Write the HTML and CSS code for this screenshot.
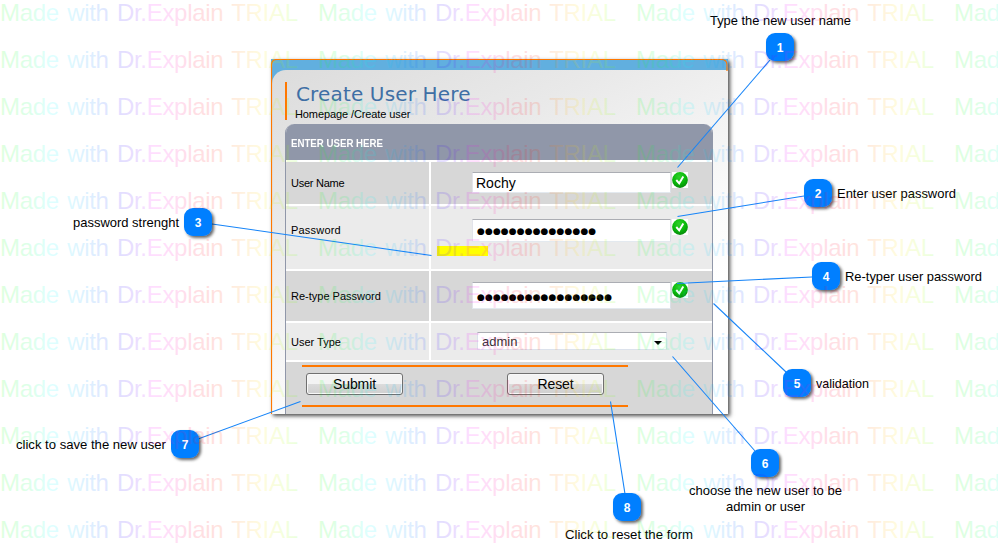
FILE: index.html
```html
<!DOCTYPE html>
<html lang="en">
<head>
<meta charset="utf-8">
<title>Create User Here</title>
<link rel="stylesheet" href="styles.css">
</head>
<body>
<main class="panel">
  <div class="body">
    <header class="heading">
      <h1>Create User Here</h1>
      <p>Homepage /Create user</p>
    </header>
    <section class="table">
      <div class="caption"><span>ENTER USER HERE</span></div>
      <div class="row r1"><div class="cell label"><span class="t1">User Name</span></div><div class="cell field"><div class="input name">Rochy</div><svg class="ok" viewBox="0 0 16 16"><use href="#check"/></svg></div></div>
      <div class="row r2 light"><div class="cell label"><span class="t2">Password</span></div><div class="cell field"><div class="input dots">●●●●●●●●●●●●●●●</div><svg class="ok" viewBox="0 0 16 16"><use href="#check"/></svg><div class="strength"></div></div></div>
      <div class="row r3"><div class="cell label"><span class="t3">Re-type Password</span></div><div class="cell field"><div class="input dots">●●●●●●●●●●●●●●●●●</div><svg class="ok" viewBox="0 0 16 16"><use href="#check"/></svg></div></div>
      <div class="row r4 light"><div class="cell label"><span class="t4">User Type</span></div><div class="cell field"><div class="select">admin<svg class="arrow" viewBox="0 0 8 4"><path d="M0 0h8L4 4z"/></svg></div></div></div>
      <div class="actions"><div class="buttons"><button>Submit</button><button>Reset</button></div></div>
    </section>
  </div>
  <svg class="trim" width="457" height="355" viewBox="0 0 457 355"><path d="M.5 355V6Q.5.5 6 .5H450Q456 .5 456 6V12" fill="none" stroke="#ff7800" stroke-width="1.2"/></svg>
</main>
<svg class="notes" width="998" height="558" viewBox="0 0 998 558">
  <defs>
    <radialGradient id="green" cx=".45" cy=".3" r=".7"><stop offset="0" stop-color="#2fd02a"/><stop offset=".6" stop-color="#08b90a"/><stop offset="1" stop-color="#07890b"/></radialGradient>
    <symbol id="check" viewBox="0 0 16 16"><rect width="16" height="16" fill="#fff"/><circle cx="8" cy="8" r="7.9" fill="url(#green)"/><path d="M4.300 8L7.200 11.300L11.300 4.400" fill="none" stroke="#fff" stroke-width="1.9"/></symbol>
    <filter id="shadow" x="-30%" y="-30%" width="180%" height="180%"><feDropShadow dx="2" dy="2" stdDeviation="1.5" flood-color="#000" flood-opacity=".6"/></filter>
  </defs>
  <g class="lines"><path d="M770 60L677.5 167.500"/><path d="M804 196L677.500 216.500"/><path d="M212 224L431.500 255.500"/><path d="M812 277L677 283.500"/><path d="M786 372L713.500 303.500"/><path d="M755 451L672.500 356.500"/><path d="M198 439L300.500 401.500"/><path d="M625 494L610.500 401.500"/></g>
  <g class="pins" filter="url(#shadow)"><rect x="766" y="33"/><rect x="804" y="179"/><rect x="184" y="208"/><rect x="812" y="262"/><rect x="783" y="369"/><rect x="751" y="449"/><rect x="171" y="430"/><rect x="613" y="493"/></g>
  <g class="nums"><text x="780" y="52">1</text><text x="818" y="198">2</text><text x="198" y="227">3</text><text x="826" y="281">4</text><text x="797" y="388">5</text><text x="765" y="468">6</text><text x="185" y="449">7</text><text x="627" y="512">8</text></g>
  <g class="texts">
    <text x="710" y="25" textLength="141" lengthAdjust="spacingAndGlyphs">Type the new user name</text>
    <text x="837" y="198" textLength="119" lengthAdjust="spacingAndGlyphs">Enter user password</text>
    <text x="73" y="227" textLength="106" lengthAdjust="spacingAndGlyphs">password strenght</text>
    <text x="845" y="281" textLength="137" lengthAdjust="spacingAndGlyphs">Re-typer user password</text>
    <text x="816" y="388" textLength="53" lengthAdjust="spacingAndGlyphs">validation</text>
    <text x="689" y="495" textLength="153" lengthAdjust="spacingAndGlyphs">choose the new user to be</text>
    <text x="726" y="511" textLength="79" lengthAdjust="spacingAndGlyphs">admin or user</text>
    <text x="16" y="449" textLength="150" lengthAdjust="spacingAndGlyphs">click to save the new user</text>
    <text x="565" y="539" textLength="128" lengthAdjust="spacingAndGlyphs">Click to reset the form</text>
  </g>
</svg>
<svg class="watermark" id="watermark" width="998" height="558" viewBox="0 0 998 558">
  <defs><linearGradient id="hues" gradientUnits="userSpaceOnUse" x1="0" y1="0" x2="318" y2="0">
    <stop offset="0" stop-color="#0f0"/><stop offset=".09" stop-color="#00ff50"/><stop offset=".16" stop-color="#0ff"/><stop offset=".22" stop-color="#00d0ff"/><stop offset=".3" stop-color="#0070ff"/><stop offset=".38" stop-color="#2000ff"/><stop offset=".43" stop-color="#6000ff"/><stop offset=".48" stop-color="#f0f"/><stop offset=".54" stop-color="#ff00c0"/><stop offset=".6" stop-color="#ff0040"/><stop offset=".67" stop-color="#ff1000"/><stop offset=".74" stop-color="#ff7000"/><stop offset=".82" stop-color="#ffe000"/><stop offset=".9" stop-color="#a0ff00"/><stop offset="1" stop-color="#0f0"/>
  </linearGradient></defs>
</svg>
<script src="watermark.js"></script>
</body>
</html>
```
FILE: styles.css
```css
* { box-sizing: border-box; }
body { margin: 0; padding-top: 59px; width: 998px; height: 558px; position: relative; overflow: hidden; background: #fff; font-family: "Liberation Sans", Arial, sans-serif; color: #000; }
.panel { position: relative; width: 457px; height: 355px; margin-left: 271px; padding: 11px 0 0 1px; background: #61afdf; box-shadow: 2px 2px 4px rgba(0,0,0,.7); }
.trim { position: absolute; left: 0; top: 0; }
.body { height: 344px; border-top-left-radius: 14px; padding: 12px 15px 0 13px; background: linear-gradient(155deg, #dcdcdc 0%, #e9e9e9 28%, #fafafa 60%, #fff 75%); }
.heading { height: 38px; border-left: 2px solid #ff7800; padding-left: 8px; }
h1 { margin: 0; padding: 1px 0 0 1px; font: 20px/23px "DejaVu Sans", Verdana, sans-serif; color: #3f6fa5; white-space: nowrap; letter-spacing: .15px; }
.heading p { margin: 2px 0 0; font: 11px/13px "Liberation Sans", Arial, sans-serif; white-space: nowrap; letter-spacing: -.1px; }
.table { margin-top: 4px; height: 290px; border: 1px solid #9097a9; border-width: 0 1px; border-radius: 9px 9px 0 0; overflow: hidden; background: #fff; }
.caption { height: 36px; padding-left: 5px; background: #9097a9; color: #fff; font: bold 11px/38px "Liberation Sans", Arial, sans-serif; }
.caption span { display: inline-block; transform: scaleX(.88); transform-origin: left; }
.row { display: grid; grid-template-columns: 143px 1fr; gap: 2px; margin-top: 2px; }
.cell { background: #d7d7d7; }
.light .cell { background: #ebebeb; }
.r1 { height: 42px; }
.r2 { height: 63px; }
.r3 { height: 50px; }
.r4 { height: 37px; }
.label { display: flex; align-items: center; padding-left: 5px; font-size: 11px; white-space: nowrap; }
.t1 { letter-spacing: -.25px; }
.t2 { letter-spacing: .2px; }
.r2 .label { align-items: flex-start; padding-top: 18px; }
.field { display: flex; flex-wrap: wrap; align-content: flex-start; padding: 10px 0 0 41px; }
.input { width: 199px; height: 21px; background: #fff; border-top: 1px solid #abadb3; border-left: 1px solid #e2e3ea; border-right: 1px solid #dbdfe6; border-bottom: 1px solid #e3e9ef; padding-left: 3px; font-size: 14px; line-height: 21px; white-space: nowrap; overflow: hidden; }
.r2 .field { padding-top: 13px; }
.r2 .input { height: 23px; line-height: 23px; }
.r3 .field { padding-top: 11px; }
.r3 .input { height: 27px; line-height: 28px; }
.input.dots { font-family: "DejaVu Sans", sans-serif; font-size: 9px; letter-spacing: .1px; padding-left: 4px; }
.ok { width: 16px; height: 16px; margin-left: 1px; }
.strength { width: 51px; height: 10px; margin: 4px 180px 0 -35px; background: #ff0; }
.r4 .field { padding: 9px 0 0 46px; }
.select { display: flex; align-items: center; width: 190px; height: 18px; padding: 0 4px; border: 1px solid #dce2ec; border-top-color: #abadb3; background: #fff; color: #333; font-size: 13px; }
.arrow { width: 8px; height: 4px; margin: 3px 0 0 auto; }
.actions { height: 52px; margin-top: 2px; padding: 3px 0 0 16px; background: #d7d7d7; }
.buttons { display: flex; justify-content: space-between; width: 326px; height: 42px; padding: 6px 24px 0 4px; border: solid #ff7800; border-width: 2px 0; }
button { width: 97px; height: 22px; padding: 0; border: 1px solid #707070; border-radius: 3px; background: linear-gradient(#f3f3f3 0 50%, #dcdcdc 50%, #cfcfcf); box-shadow: inset 0 0 0 1px #f8f8f8; font: 14px/19px "Liberation Sans", Arial, sans-serif; letter-spacing: -.1px; color: #000; }
.notes, .watermark { position: absolute; left: 0; top: 0; pointer-events: none; }
.lines path { stroke: #1684f8; stroke-width: 1.1; }
.pins rect { width: 28px; height: 28px; rx: 9px; fill: #007fff; }
.nums text { fill: #fff; font-size: 12px; font-weight: bold; text-anchor: middle; }
.texts text { font-size: 13px; }
.watermark text { font-size: 24px; fill: url(#hues); fill-opacity: .13; }
```
FILE: watermark.js
```js
const layer = document.getElementById("watermark");
for (let row = 0; row < 12; row++) {
  for (let col = 0; col < 4; col++) {
    const t = document.createElementNS("http://www.w3.org/2000/svg", "text");
    t.setAttribute("transform", `translate(${col * 318} ${21 + row * 47})`);
    t.setAttribute("textLength", "298");
    t.setAttribute("word-spacing", "2");
    t.textContent = "Made with Dr.Explain TRIAL";
    layer.append(t);
  }
}
```
